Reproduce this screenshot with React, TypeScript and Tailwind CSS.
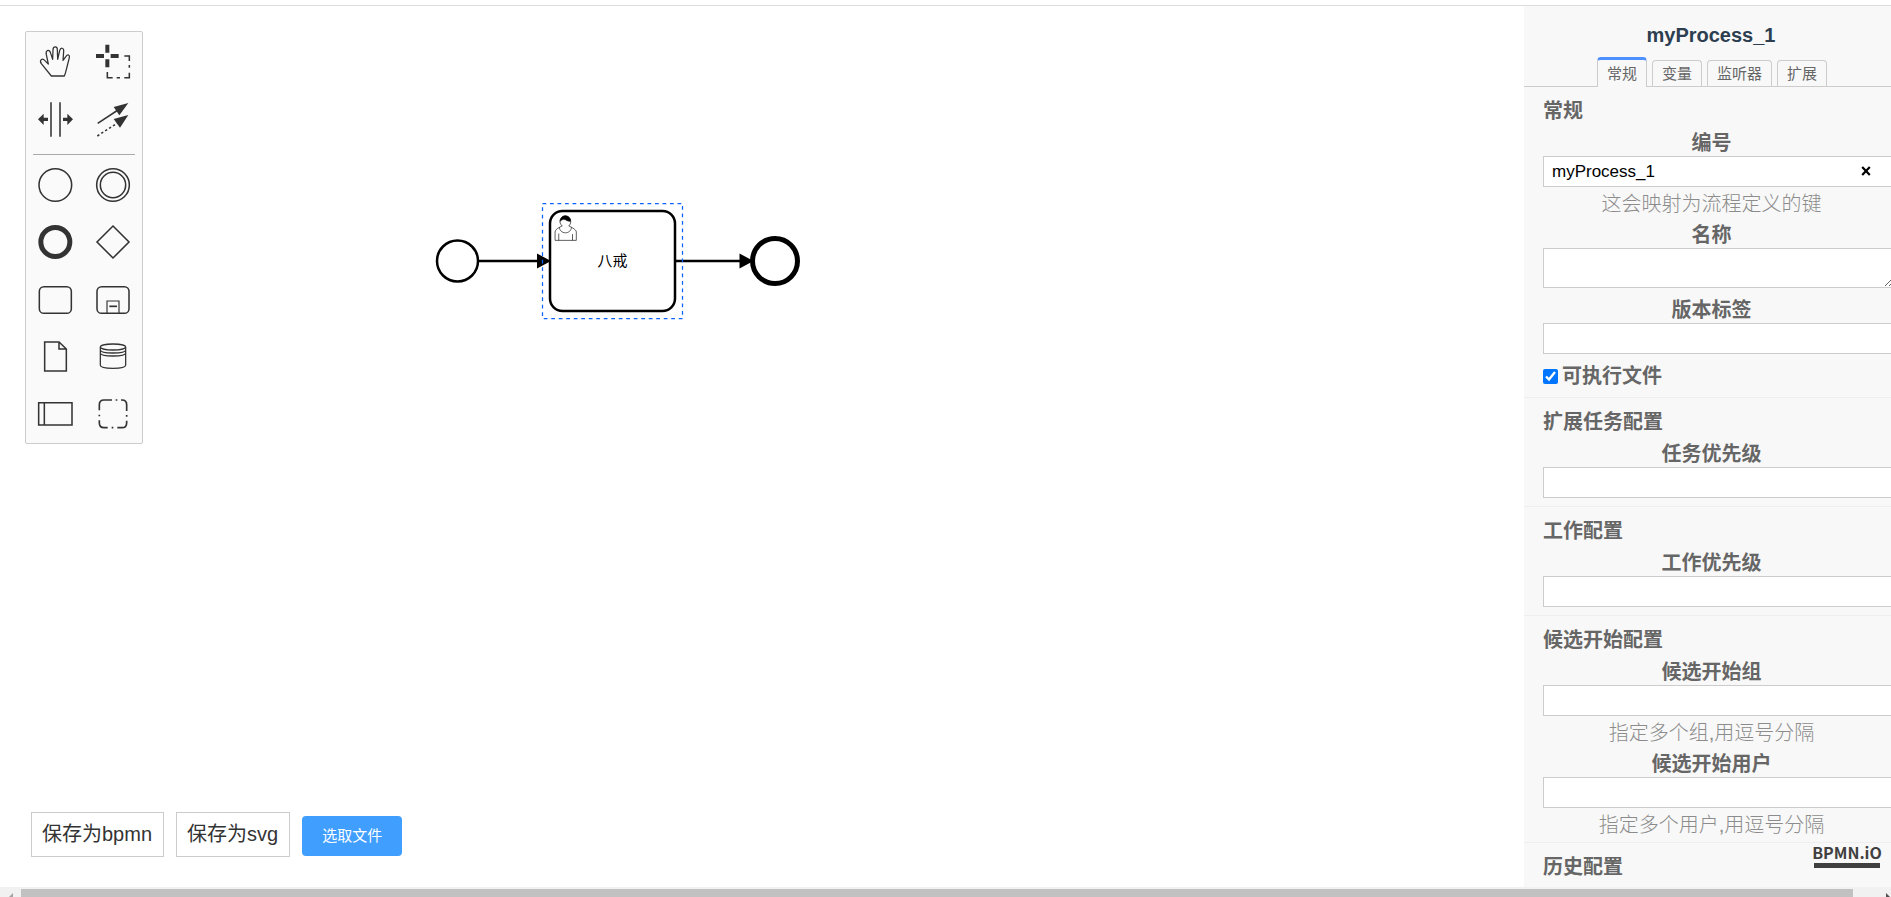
import { useState, type ReactNode } from 'react';

const SANS = "font-['Liberation_Sans','Noto_Sans_CJK_SC',sans-serif]";

function Glyph({ children }: { children: ReactNode }) {
  return (
    <svg viewBox="-87 -87 174 174" className="h-[58px] w-[58px]" fill="none" stroke="#333" strokeWidth="4.6" aria-hidden="true">
      {children}
    </svg>
  );
}

const tools: { label: string; icon: ReactNode }[] = [
  {
    label: '手形工具',
    icon: (
      <path
        strokeWidth="3.8"
        strokeLinejoin="round"
        d="M-11 45L-41 8C-48 -3 -38 -10 -31 -2L-20 9L-26 -19C-29 -33 -18 -36 -14 -26L-7 -5L-6 -34C-5 -45 7 -45 7 -34L8 -5L14 -31C17 -42 27 -40 26 -29L24 -2L33 -14C38 -22 45 -18 43 -10L36 18C34 26 32 36 28 45Z"
      />
    ),
  },
  {
    label: '框选工具',
    icon: (
      <>
        <path fill="#333" stroke="none" d="M-23 -49h12v24h-12zM-23 -5h12v24h-12zM-51 -21h24v12h-24zM-7 -21h24v12h-24z" />
        <path d="M34 -15H49V0M49 12V20M49 35V50H34M21 50H11M-1 50H-17V33" />
      </>
    ),
  },
  {
    label: '空间工具',
    icon: (
      <>
        <path d="M-12 -50V53M15 -50V53" />
        <path fill="#333" stroke="none" d="M-51 1L-34 -16V-4H-21V6H-34V18ZM54 1L37 -16V-4H24V6H37V18Z" />
      </>
    ),
  },
  {
    label: '连接工具',
    icon: (
      <>
        <path d="M-46 13L15 -27" />
        <path strokeDasharray="7 7" d="M-47 51L15 11" />
        <path fill="#333" stroke="none" d="M46 -48L2 -36L19 -11ZM46 -12L2 0L21 26Z" />
      </>
    ),
  },
];

const shapes: { label: string; icon: ReactNode }[] = [
  { label: '开始事件', icon: <circle cx="1" r="49" /> },
  {
    label: '中间事件',
    icon: (
      <>
        <circle r="49" />
        <circle r="38" />
      </>
    ),
  },
  { label: '结束事件', icon: <circle cx="1" r="43.5" strokeWidth="15" /> },
  { label: '网关', icon: <path d="M0 -48L48 0L0 48L-48 0Z" /> },
  { label: '任务', icon: <rect x="-47" y="-40" width="96" height="80" rx="14" /> },
  {
    label: '子流程',
    icon: (
      <>
        <rect x="-48" y="-40" width="96" height="80" rx="14" />
        <path d="M-18 40V3H18V40" strokeWidth="3.5" />
        <path d="M-11 19H12" strokeWidth="5" />
      </>
    ),
  },
  { label: '数据对象', icon: <path d="M-31 -45H12L34 -24V42H-31ZM12 -45V-24H34" /> },
  {
    label: '数据存储',
    icon: (
      <>
        <ellipse cx="0" cy="-30" rx="38" ry="9" strokeWidth="3.8" />
        <path strokeWidth="3.8" d="M-38 -30V25C-38 37 38 37 38 25V-30M-38 -21C-38 -9 38 -9 38 -21M-38 -12C-38 0 38 0 38 -12" />
      </>
    ),
  },
  { label: '参与者', icon: <path d="M-49 -34H51V33H-49ZM-32 -34V33" /> },
  {
    label: '分组',
    icon: (
      <path
        strokeWidth="5"
        d="M-41 -11V-28Q-41 -42 -27 -42H-3M8 -42H13M24 -42H27Q41 -42 41 -28V-9M41 3V8M41 20V26Q41 41 27 41H13M1 41H-4M-16 41H-27Q-41 41 -41 27V19M-41 7V2"
      />
    ),
  },
];

function ToolButton({ label, icon }: { label: string; icon: ReactNode }) {
  return (
    <button type="button" aria-label={label} className="flex items-center justify-center">
      <Glyph>{icon}</Glyph>
    </button>
  );
}

function Palette() {
  return (
    <div className="relative ml-[25px] mt-[25px] w-[118px] rounded-xs border border-[#ccc] bg-[#fafafa]">
      <div className="grid grid-cols-2">
        {tools.map((t) => (
          <ToolButton key={t.label} {...t} />
        ))}
      </div>
      <hr className="mx-[7px] mb-px mt-[6px] border-t border-[#aaa]" />
      <div className="grid h-[287px] grid-cols-2 grid-rows-5">
        {shapes.map((t) => (
          <ToolButton key={t.label} {...t} />
        ))}
      </div>
    </div>
  );
}

function Diagram() {
  return (
    <svg className="absolute inset-0 h-full w-full" fill="none" stroke="#000" strokeWidth="2.5">
      <g transform="translate(0 -6)">
        <circle cx="457.5" cy="261" r="20.5" fill="#fff" />
        <path d="M478 261H540M675 261H742" />
        <path fill="#000" stroke="none" d="M537 253.5L551 261L537 268.5ZM739.5 253.5L753.5 261L739.5 268.5Z" />
        <rect x="550" y="211" width="125" height="100" rx="12.5" fill="#fff" />
        <g transform="translate(550 211) scale(1.25)" strokeWidth="0.5">
          <path d="m15,12c0.909,-0.845 1.594,-2.049 1.594,-3.385 0,-2.554 -1.805,-4.622 -4.357,-4.622 -2.552,0 -4.288,2.068 -4.288,4.622 0,1.348 0.974,2.562 1.896,3.405 -0.529,0.187 -5.669,2.097 -5.794,4.756v6.718h17v-6.718c0,-2.298 -5.528,-4.595 -6.051,-4.776zm-8,6l0,5.5m11,0l0,-5" />
          <path d="m15,12m2.162,1.009c0,2.447 -2.158,4.431 -4.821,4.431 -2.665,0 -4.822,-1.981 -4.822,-4.431" />
          <path fill="#000" d="m15,12m-6.9,-3.8c0,0 2.251,-2.358 4.274,-1.177 2.024,1.181 4.224,1.537 4.124,0.965 -0.098,-0.57 -0.117,-3.791 -4.191,-4.136 -3.575,0.001 -4.208,3.67 -4.207,4.348z" />
        </g>
        <text x="612.5" y="266" textAnchor="middle" fill="#000" stroke="none" className={`text-[15px] ${SANS}`}>
          八戒
        </text>
        <circle cx="775" cy="261" r="22.5" strokeWidth="5" fill="#fff" />
        <rect x="542.5" y="203.5" width="140" height="115" stroke="#0a63ff" strokeWidth="1.25" strokeDasharray="3.75 3.75" />
      </g>
    </svg>
  );
}

function Group({ title, children }: { title: string; children?: ReactNode }) {
  return (
    <section className="border-b border-[#eee] pb-2 pl-[19px] pr-[18px]">
      <h2 className="pb-[5px] pt-[11px] text-xl/[27px] font-bold text-[#666]">{title}</h2>
      <div className="flex flex-col gap-[9px]">{children}</div>
    </section>
  );
}

function Field({
  id,
  label,
  value = '',
  hint,
  multiline,
}: {
  id: string;
  label: string;
  value?: string;
  hint?: string;
  multiline?: boolean;
}) {
  const [text, setText] = useState(value);
  return (
    <div className="flex flex-col">
      <label htmlFor={id} className="text-center text-xl/[26px] font-bold text-[#666]">
        {label}
      </label>
      {multiline ? (
        <textarea
          id={id}
          value={text}
          onChange={(e) => setText(e.target.value)}
          className="h-10 w-[351px] border border-[#ccc] bg-white px-2 text-[17px] text-black outline-none"
        />
      ) : (
        <div className="flex h-[31px] w-[351px] items-center border border-[#ccc] bg-white">
          <input
            id={id}
            type="text"
            value={text}
            onChange={(e) => setText(e.target.value)}
            className="min-w-0 flex-1 bg-transparent px-2 text-[17px] text-black outline-none"
          />
          {text && (
            <button type="button" aria-label="清除" onClick={() => setText('')} className="mr-[22px] pb-0.5">
              <svg viewBox="0 0 10 10" className="h-[10px] w-[10px]" stroke="#000" strokeWidth="2.2" aria-hidden="true">
                <path d="M1.2 1L8.8 9M8.8 1L1.2 9" />
              </svg>
            </button>
          )}
        </div>
      )}
      {hint && <p className="h-[26px] text-center text-xl/[34px] font-light text-[#8c8c8c]">{hint}</p>}
    </div>
  );
}

const tabs = ['常规', '变量', '监听器', '扩展'];

function PropertiesPanel() {
  const [active, setActive] = useState('常规');
  const [executable, setExecutable] = useState(true);
  return (
    <aside className="relative w-[367px] shrink-0 overflow-hidden bg-[#f8f8f8]">
      <div className="w-[374px]">
        <h1 className="pt-[15px] text-center text-xl/[28px] font-bold text-[#2c3e50]">myProcess_1</h1>
        <div role="tablist" className="mt-2 flex items-end justify-center gap-[5px] border-b border-[#ccc] pl-[2px]">
          {tabs.map((t) => (
            <button
              key={t}
              type="button"
              role="tab"
              aria-selected={t === active}
              onClick={() => setActive(t)}
              className={
                t === active
                  ? '-mb-px h-[30px] rounded-t-[4px] border border-b-0 border-t-[3px] border-[#ccc] border-t-[#4d90ff] bg-[#f8f8f8] px-[9px] text-[15px]/[27px] text-[#666]'
                  : 'h-[26px] rounded-t-[4px] border border-b-0 border-[#ccc] bg-[#f8f8f8] px-[9px] text-[15px]/[25px] text-[#666]'
              }
            >
              {t}
            </button>
          ))}
        </div>
        <Group title="常规">
          <Field id="process-id" label="编号" value="myProcess_1" hint="这会映射为流程定义的键" />
          <Field id="process-name" label="名称" multiline />
          <Field id="version-tag" label="版本标签" />
          <div className="flex h-[26px] items-center gap-1">
            <input
              id="executable"
              type="checkbox"
              checked={executable}
              onChange={(e) => setExecutable(e.target.checked)}
              className="h-[15px] w-[15px] accent-[#0075ff]"
            />
            <label htmlFor="executable" className="text-xl/[26px] font-bold text-[#666]">
              可执行文件
            </label>
          </div>
        </Group>
        <Group title="扩展任务配置">
          <Field id="task-priority" label="任务优先级" />
        </Group>
        <Group title="工作配置">
          <Field id="job-priority" label="工作优先级" />
        </Group>
        <Group title="候选开始配置">
          <Field id="starter-groups" label="候选开始组" hint="指定多个组,用逗号分隔" />
          <Field id="starter-users" label="候选开始用户" hint="指定多个用户,用逗号分隔" />
        </Group>
        <Group title="历史配置" />
      </div>
      <a
        href="#bpmn"
        className="absolute bottom-[19px] right-[11px] flex w-[66px] justify-center border-b-[5px] border-[#404040] font-['Noto_Sans_CJK_SC',sans-serif] text-[16px]/[22px] font-bold text-[#404040]"
      >
        BPMN.iO
      </a>
    </aside>
  );
}

export default function App() {
  return (
    <div className={`flex h-screen flex-col overflow-hidden bg-white ${SANS}`}>
      <div className="mt-[5px] h-px shrink-0 bg-[#ddd]" />
      <div className="flex min-h-0 flex-1">
        <main className="relative flex min-w-0 flex-1 flex-col justify-between">
          <Diagram />
          <Palette />
          <div className="relative mb-[30px] ml-[31px] flex items-end gap-3">
            <button type="button" className="h-[45px] border border-[#ccc] bg-white pb-[2px] pl-[10px] pr-[11px] text-xl text-[#333]">
              保存为bpmn
            </button>
            <button type="button" className="h-[45px] border border-[#ccc] bg-white pb-[2px] pl-[10px] pr-[11px] text-xl text-[#333]">
              保存为svg
            </button>
            <button type="button" className="mb-px h-10 rounded-[4px] bg-[#409eff] px-5 text-[15px] text-white">
              选取文件
            </button>
          </div>
        </main>
        <PropertiesPanel />
      </div>
      <div className="flex h-[10px] shrink-0 bg-[#f1f1f1] pt-[2px]" aria-hidden="true">
        <svg viewBox="0 0 21 8" className="h-2 w-[21px]">
          <path d="M13 4V8H9Z" fill="#a3a3a3" />
        </svg>
        <div className="flex-1 bg-[#c1c1c1]" />
        <svg viewBox="0 0 38 8" className="h-2 w-[38px]">
          <path d="M33 4V8H37Z" fill="#505050" />
        </svg>
      </div>
    </div>
  );
}
